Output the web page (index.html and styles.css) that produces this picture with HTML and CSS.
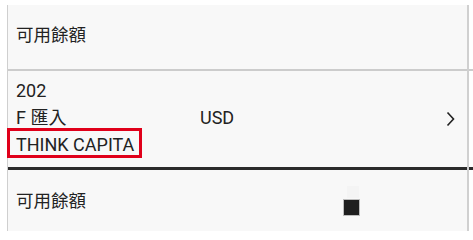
FILE: index.html
```html
<!DOCTYPE html>
<html lang="zh-Hant">
<head>
<meta charset="utf-8">
<link rel="stylesheet" href="styles.css">
</head>
<body>
<div class="page">
  <div class="panel">
    <div class="row row-top">
      <span class="label">可用餘額</span>
    </div>
    <div class="divider-light"></div>
    <div class="row row-main">
      <div class="line">202</div>
      <div class="line line-mid">
        <span class="type">F 匯入</span>
        <span class="cur">USD</span>
        <svg class="chev" width="9" height="16" viewBox="0 0 9 16"><path d="M1.5 1.5 L7.5 8 L1.5 14.5" fill="none" stroke="#222" stroke-width="1.6"/></svg>
      </div>
      <div class="line">THINK CAPITA</div>
      <div class="highlight"></div>
    </div>
    <div class="divider-dark"></div>
    <div class="row row-bottom">
      <span class="label">可用餘額</span>
      <div class="ghost"></div>
      <div class="square"></div>
    </div>
  </div>
</div>
</body>
</html>
```
FILE: styles.css
```css
html, body {
  margin: 0;
  padding: 0;
  background: #ffffff;
}
body {
  width: 473px;
  height: 231px;
  overflow: hidden;
  font-family: Roboto, "Noto Sans CJK TC", sans-serif;
  font-size: 17.5px;
  color: #222222;
}
.page {
  padding-top: 5px;
}
.panel {
  position: relative;
  margin-left: 7px;
  width: 461px;
  background: #f8f8f8;
  border-left: 1px solid #cfcfcf;
  height: 226px;
}
.panel::after {
  content: "";
  position: absolute;
  right: 0;
  top: 0;
  bottom: 0;
  width: 2px;
  background: #d0d0d0;
}
.row {
  position: relative;
  padding-left: 8px;
  line-height: 27px;
}
.line {
  font-size: 18px;
}
.row-top {
  height: 64px;
  box-sizing: border-box;
  padding-top: 17px;
}
.divider-light {
  height: 2px;
  background: #cccccc;
  margin-right: -5px;
}
.row-main {
  height: 96px;
  box-sizing: border-box;
  padding-top: 6px;
  padding-right: 14px;
}
.line-mid {
  display: flex;
  align-items: center;
}
.type {
  width: 184px;
}
.cur {
  flex: 1;
}
.chev {
  display: block;
  margin-top: 2px;
}
.highlight {
  position: absolute;
  left: -1px;
  top: 57px;
  width: 135px;
  height: 30px;
  box-sizing: border-box;
  border: 3px solid #e0001a;
}
.divider-dark {
  height: 3px;
  background: #2b2b2b;
  margin-right: -5px;
}
.row-bottom {
  height: 61px;
  box-sizing: border-box;
  padding-top: 18px;
}
.square {
  position: absolute;
  left: 336px;
  top: 30px;
  width: 15px;
  height: 15px;
  background: #1f1f1f;
  box-shadow: 0 0 0 1px #bdbdbd;
}
.ghost {
  position: absolute;
  left: 339px;
  top: 16px;
  width: 12px;
  height: 12px;
  background: #f4f4f4;
}
```
